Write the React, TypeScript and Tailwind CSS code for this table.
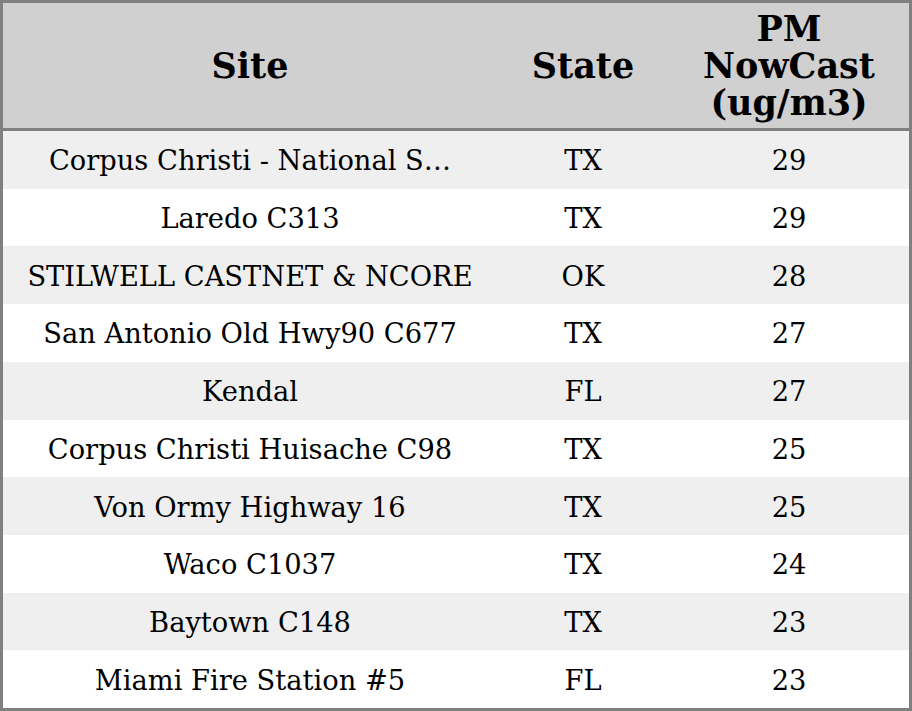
const rows = [
  { site: "Corpus Christi - National S…", state: "TX", pm: 29 },
  { site: "Laredo C313", state: "TX", pm: 29 },
  { site: "STILWELL CASTNET & NCORE", state: "OK", pm: 28 },
  { site: "San Antonio Old Hwy90 C677", state: "TX", pm: 27 },
  { site: "Kendal", state: "FL", pm: 27 },
  { site: "Corpus Christi Huisache C98", state: "TX", pm: 25 },
  { site: "Von Ormy Highway 16", state: "TX", pm: 25 },
  { site: "Waco C1037", state: "TX", pm: 24 },
  { site: "Baytown C148", state: "TX", pm: 23 },
  { site: "Miami Fire Station #5", state: "FL", pm: 23 },
];

export default function App() {
  return (
    <div className="w-[912px] h-[711px] border-[3px] border-[#808080] bg-white text-black font-['DejaVu_Serif',serif] flex flex-col">
      {/* header */}
      <div className="h-[128px] shrink-0 bg-[#d0d0d0] border-b-[3px] border-[#808080] flex items-center font-bold text-[35px] leading-[37px]">
        <div className="w-[494px] text-center">Site</div>
        <div className="w-[172px] text-center">State</div>
        <div className="flex-1 text-center">
          PM
          <br />
          NowCast
          <br />
          (ug/m3)
        </div>
      </div>

      {rows.map((r, i) => (
        <div
          key={i}
          className={`flex-1 flex items-center pt-[4px] text-[27.3px] ${
            i % 2 === 0 ? "bg-[#efefef]" : "bg-white"
          }`}
        >
          <div className="w-[494px] text-center whitespace-nowrap">{r.site}</div>
          <div className="w-[172px] text-center">{r.state}</div>
          <div className="flex-1 text-center">{r.pm}</div>
        </div>
      ))}
    </div>
  );
}
